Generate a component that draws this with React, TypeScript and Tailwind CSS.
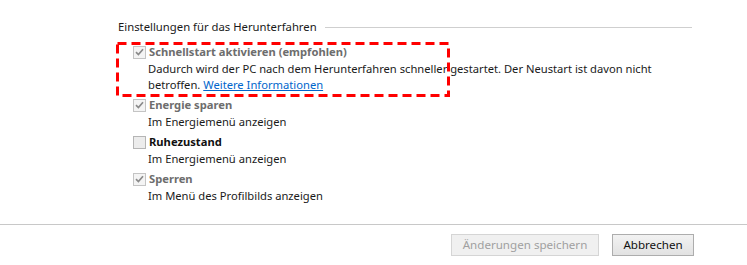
import React from "react";

function Box({ checked, disabled }: { checked: boolean; disabled?: boolean }) {
  return (
    <span
      className={
        "flex h-[13px] w-[13px] shrink-0 items-center justify-center border " +
        (disabled ? "border-[#c4c4c4] bg-[#f4f4f4]" : "border-[#b5b5b5] bg-[#ececec]")
      }
    >
      {checked && (
        <svg width="9" height="8" viewBox="0 0 9 8">
          <path d="M1 4.2 L3.4 6.5 L8 1.2" fill="none" stroke="#8a8a8a" strokeWidth="1.7" />
        </svg>
      )}
    </span>
  );
}

function Option({
  label,
  checked,
  disabled,
  children,
}: {
  label: string;
  checked: boolean;
  disabled?: boolean;
  children: React.ReactNode;
}) {
  return (
    <div className="flex flex-col">
      <div className="flex h-[17px] items-center gap-[3px]">
        <Box checked={checked} disabled={disabled} />
        <span className={"font-bold " + (disabled ? "text-[#6d6d6d]" : "text-[#111]")}>{label}</span>
      </div>
      <div className="pl-[15px] leading-[16px]">{children}</div>
    </div>
  );
}

export default function App() {
  return (
    <div
      className="flex h-[265px] w-[747px] flex-col bg-white text-[11.2px] text-[#1a1a1a]"
      style={{ fontFamily: '"Noto Sans", "Liberation Sans", sans-serif' }}
    >
      <div className="flex items-center gap-2 pl-[118px] pr-[55px] pt-[19px]">
        <span className="whitespace-nowrap text-[11.3px]">Einstellungen für das Herunterfahren</span>
        <div className="h-px flex-1 bg-[#cfcfcf]" />
      </div>

      <div className="flex flex-col gap-[4px] pl-[133px] pt-[8px]">
        <div className="relative">
          <Option label="Schnellstart aktivieren (empfohlen)" checked disabled>
            <div>Dadurch wird der PC nach dem Herunterfahren schneller gestartet. Der Neustart ist davon nicht</div>
            <div>
              betroffen.{" "}
              <a className="text-[#0066cc] underline">Weitere Informationen</a>
            </div>
          </Option>
          {/* red dashed annotation frame */}
          <svg
            className="pointer-events-none absolute left-[-17px] top-[-2px]"
            width="334"
            height="55"
            viewBox="0 0 334 55"
          >
            <rect
              x="1.5"
              y="1.5"
              width="331"
              height="52"
              fill="none"
              stroke="#ff0000"
              strokeWidth="3"
              strokeDasharray="9 5"
            />
          </svg>
        </div>
        <Option label="Energie sparen" checked disabled>
          Im Energiemenü anzeigen
        </Option>
        <Option label="Ruhezustand" checked={false}>
          Im Energiemenü anzeigen
        </Option>
        <Option label="Sperren" checked disabled>
          Im Menü des Profilbilds anzeigen
        </Option>
      </div>

      <div className="mt-auto h-px bg-[#c8c8c8]" />
      <div className="flex h-[40px] items-center justify-end gap-[13px] pr-[53px]">
        <button className="h-[22px] w-[148px] border border-[#d5d5d5] bg-[#f0f0f0] text-[11.6px] text-[#a0a0a0]">
          Änderungen speichern
        </button>
        <button className="h-[22px] w-[82px] border border-[#adadad] bg-gradient-to-b from-[#f2f2f2] to-[#e2e2e2] text-[11.6px] text-[#111]">
          Abbrechen
        </button>
      </div>
    </div>
  );
}
